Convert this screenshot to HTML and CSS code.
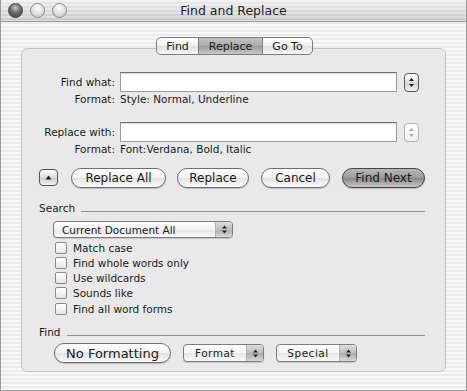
FILE: index.html
```html
<!DOCTYPE html>
<html lang="en">
<head>
  <meta charset="UTF-8">
  <title>Find and Replace</title>
  <link rel="stylesheet" href="styles.css">
</head>
<body>
  <div class="window">
    <div class="titlebar">
      <div class="lights">
        <span class="light light-dark"></span>
        <span class="light"></span>
        <span class="light"></span>
      </div>
      <div class="title">Find and Replace</div>
    </div>

    <div class="content">
      <div class="tabs">
        <span class="tab">Find</span>
        <span class="tab tab-active">Replace</span>
        <span class="tab">Go To</span>
      </div>

      <div class="group">
        <div class="field-row">
          <span class="label">Find what:</span>
          <div class="input"></div>
          <span class="stepper">
            <svg width="7" height="11" viewBox="0 0 7 11"><path d="M3.5 1 L6 4 L1 4 Z M3.5 10 L6 7 L1 7 Z" fill="#222"/></svg>
          </span>
        </div>
        <div class="format-row">
          <span class="label">Format:</span>
          <span>Style: Normal, Underline</span>
        </div>

        <div class="field-row second">
          <span class="label">Replace with:</span>
          <div class="input"></div>
          <span class="stepper stepper-off">
            <svg width="7" height="11" viewBox="0 0 7 11"><path d="M3.5 1 L6 4 L1 4 Z M3.5 10 L6 7 L1 7 Z" fill="#aaa"/></svg>
          </span>
        </div>
        <div class="format-row">
          <span class="label">Format:</span>
          <span>Font:Verdana, Bold, Italic</span>
        </div>

        <div class="button-row">
          <span class="small-button">
            <svg width="7" height="5" viewBox="0 0 7 5"><path d="M3.5 0.5 L6.5 4.5 L0.5 4.5 Z" fill="#222"/></svg>
          </span>
          <span class="button btn-replace-all">Replace All</span>
          <span class="button btn-replace">Replace</span>
          <span class="button btn-cancel">Cancel</span>
          <span class="button button-default btn-next">Find Next</span>
        </div>

        <div class="section-head">
          <span>Search</span>
          <span class="rule"></span>
        </div>

        <div class="popup popup-wide">
          <span class="popup-text">Current Document All</span>
          <span class="popup-arrows">
            <svg width="7" height="11" viewBox="0 0 7 11"><path d="M3.5 1.5 L6 4.5 L1 4.5 Z M3.5 9.5 L6 6.5 L1 6.5 Z" fill="#222"/></svg>
          </span>
        </div>

        <ul class="checks">
          <li><span class="checkbox"></span>Match case</li>
          <li><span class="checkbox"></span>Find whole words only</li>
          <li><span class="checkbox"></span>Use wildcards</li>
          <li><span class="checkbox"></span>Sounds like</li>
          <li><span class="checkbox"></span>Find all word forms</li>
        </ul>

        <div class="section-head find-head">
          <span>Find</span>
          <span class="rule"></span>
        </div>

        <div class="bottom-row">
          <span class="button btn-noformat">No Formatting</span>
          <div class="popup popup-small">
            <span class="popup-text">Format</span>
            <span class="popup-arrows">
              <svg width="7" height="11" viewBox="0 0 7 11"><path d="M3.5 1.5 L6 4.5 L1 4.5 Z M3.5 9.5 L6 6.5 L1 6.5 Z" fill="#222"/></svg>
            </span>
          </div>
          <div class="popup popup-small">
            <span class="popup-text">Special</span>
            <span class="popup-arrows">
              <svg width="7" height="11" viewBox="0 0 7 11"><path d="M3.5 1.5 L6 4.5 L1 4.5 Z M3.5 9.5 L6 6.5 L1 6.5 Z" fill="#222"/></svg>
            </span>
          </div>
        </div>
      </div>
    </div>
  </div>
</body>
</html>
```

FILE: styles.css
```css
:root {
  --text: #1a1a1a;
  --edge: #8a8a8a;
  --stripes: repeating-linear-gradient(to bottom, #f8f8f8 0 2px, #ececec 2px 4px);
}

body {
  margin: 0;
  font-family: 'DejaVu Sans', sans-serif;
  color: var(--text);
}

.window {
  width: 467px;
  height: 391px;
  box-sizing: border-box;
  border: 1px solid #9a9a9a;
  border-top: none;
  background: var(--stripes);
  display: flex;
  flex-direction: column;
}

/* title bar */
.titlebar {
  height: 22px;
  flex-shrink: 0;
  box-sizing: border-box;
  border-bottom: 1px solid #9c9c9c;
  background: repeating-linear-gradient(to bottom, rgba(255,255,255,0.35) 0 2px, rgba(0,0,0,0) 2px 4px),
              linear-gradient(to bottom, #ececec, #c9c9c9);
  display: grid;
  grid-template-columns: 1fr auto 1fr;
  align-items: center;
}

.lights {
  display: flex;
  gap: 7px;
  padding-left: 7px;
}

.light {
  width: 13px;
  height: 13px;
  border-radius: 50%;
  border: 1px solid #8c8c8c;
  background: radial-gradient(circle at 50% 30%, #ffffff 0, #e6e6e6 45%, #bdbdbd 100%);
}

.light-dark {
  border-color: #444;
  background: radial-gradient(circle at 50% 30%, #c8c8c8 0, #6d6d6d 45%, #3c3c3c 100%);
}

.title {
  font-size: 12.5px;
  color: #222;
}

/* body */
.content {
  flex: 1;
  padding: 15px 20px 16px 20px;
  display: flex;
  flex-direction: column;
  align-items: stretch;
}

.tabs {
  align-self: center;
  display: flex;
  height: 18px;
  flex-shrink: 0;
  box-sizing: border-box;
  border: 1px solid #7d7d7d;
  border-radius: 5px;
  overflow: hidden;
  background: linear-gradient(to bottom, #ffffff, #f0f0f0 50%, #e0e0e0 51%, #f6f6f6);
  margin-bottom: -7px;
  position: relative;
  z-index: 1;
  font-size: 11px;
  margin-left: 2px;
}

.tab {
  display: flex;
  align-items: center;
  padding: 0 9px;
}

.tab + .tab {
  border-left: 1px solid #7d7d7d;
}

.tab-active {
  background: linear-gradient(to bottom, #c4c4c4, #a9a9a9 50%, #9b9b9b 51%, #c9c9c9);
  padding: 0 10px;
}

.group {
  background: #e9e9e9;
  border: 1px solid #c4c4c4;
  border-radius: 6px;
  padding: 23px 0 8px 0;
  font-size: 10.5px;
}

.field-row {
  display: flex;
  align-items: center;
  height: 20px;
}

.field-row.second {
  margin-top: 16px;
}

.label {
  width: 93px;
  flex-shrink: 0;
  text-align: right;
  margin-right: 5px;
}

.input {
  width: 277px;
  height: 20px;
  box-sizing: border-box;
  background: #fff;
  border: 1px solid #9c9c9c;
  border-top-color: #6f6f6f;
  box-shadow: inset 0 1px 1px rgba(0,0,0,0.15);
}

.stepper {
  width: 15px;
  height: 19px;
  box-sizing: border-box;
  margin-left: 7px;
  border: 1px solid #555;
  border-radius: 4px;
  background: linear-gradient(to bottom, #ffffff, #dedede 50%, #cfcfcf 51%, #f2f2f2);
  display: flex;
  align-items: center;
  justify-content: center;
}

.stepper-off {
  border-color: #b5b5b5;
  background: linear-gradient(to bottom, #ffffff, #f0f0f0);
}

.format-row {
  display: flex;
  align-items: center;
  height: 14px;
}

/* push buttons */
.button-row {
  display: flex;
  align-items: center;
  margin-top: 11px;
  padding-left: 17px;
  height: 21px;
}

.small-button {
  width: 19px;
  height: 17px;
  box-sizing: border-box;
  border: 1px solid #555;
  border-radius: 4px;
  background: linear-gradient(to bottom, #ffffff, #dcdcdc 50%, #cdcdcd 51%, #f0f0f0);
  display: flex;
  align-items: center;
  justify-content: center;
  margin-right: 13px;
}

.button {
  height: 20px;
  box-sizing: border-box;
  border: 1px solid #6e6e6e;
  border-radius: 10px;
  background: linear-gradient(to bottom, #ffffff, #f2f2f2 50%, #e2e2e2 51%, #fbfbfb);
  box-shadow: 0 1px 1px rgba(0,0,0,0.2);
  display: flex;
  align-items: center;
  justify-content: center;
  font-size: 12px;
}

.btn-replace-all { width: 95px; }
.btn-replace { width: 72px; margin-left: 11px; }
.btn-cancel { width: 69px; margin-left: 12px; }
.btn-next { width: 83px; margin-left: 12px; }

.button-default {
  border-color: #444;
  background: linear-gradient(to bottom, #b9b9b9, #9a9a9a 50%, #878787 51%, #c8c8c8);
}

/* group headings */
.section-head {
  display: flex;
  align-items: center;
  height: 14px;
  margin-top: 13px;
  padding-left: 17px;
  padding-right: 20px;
}

.rule {
  flex: 1;
  height: 1px;
  background: #8f8f8f;
  margin-left: 6px;
  margin-top: 6px;
}

.find-head {
  margin-top: 9px;
}

/* pop-up menus */
.popup {
  height: 17px;
  box-sizing: border-box;
  border: 1px solid #7d7d7d;
  border-radius: 4px;
  background: linear-gradient(to bottom, #ffffff, #f3f3f3 50%, #e6e6e6 51%, #fafafa);
  display: flex;
  align-items: stretch;
  overflow: hidden;
  box-shadow: 0 1px 1px rgba(0,0,0,0.15);
}

.popup-wide {
  width: 180px;
  margin-left: 31px;
  margin-top: 6px;
}

.popup-text {
  flex: 1;
  display: flex;
  align-items: center;
  padding-left: 8px;
}

.popup-arrows {
  width: 16px;
  display: flex;
  align-items: center;
  justify-content: center;
  border-left: 1px solid #b0b0b0;
  background: linear-gradient(to bottom, #dedede, #bdbdbd 50%, #ababab 51%, #d9d9d9);
}

.checks {
  list-style: none;
  margin: 2px 0 0 0;
  padding: 0 0 0 33px;
}

.checks li {
  display: flex;
  align-items: center;
  height: 15.25px;
}

.checkbox {
  width: 12px;
  height: 12px;
  box-sizing: border-box;
  border: 1px solid #8a8a8a;
  border-radius: 2px;
  background: linear-gradient(to bottom, #ffffff, #e6e6e6);
  margin-right: 6px;
}

.bottom-row {
  display: flex;
  align-items: center;
  margin-top: 4px;
  padding-left: 32px;
  height: 20px;
}

.btn-noformat {
  width: 117px;
  font-size: 13px;
}

.popup-small {
  width: 81px;
  margin-left: 12px;
  height: 18px;
}

.popup-small .popup-text {
  justify-content: center;
  padding-left: 0;
  letter-spacing: 0.5px;
}
```
